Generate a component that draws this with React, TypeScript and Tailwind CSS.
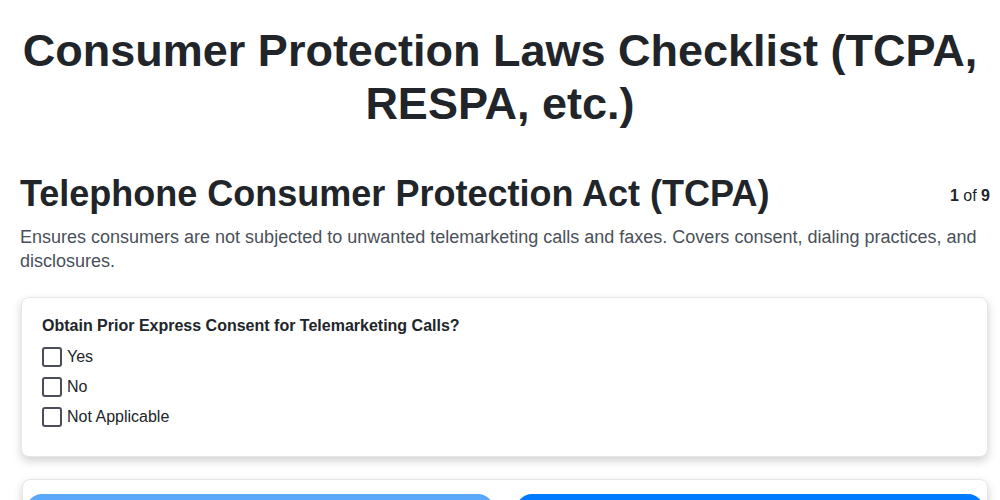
import { useState } from 'react';

const options = ['Yes', 'No', 'Not Applicable'];

export default function App() {
  const [checked, setChecked] = useState<Record<string, boolean>>({});

  return (
    <div className="min-h-screen bg-white text-[#212529]" style={{ fontFamily: '"Liberation Sans", Arial, sans-serif' }}>
      <h1 className="pt-[24px] text-center text-[45px] leading-[53px] font-bold">
        Consumer Protection Laws Checklist (TCPA, RESPA, etc.)
      </h1>

      <div className="pl-5 pr-[10px]">
        <div className="mt-[42px] flex items-start justify-between">
          <h2 className="text-[36px] leading-[43px] font-bold">Telephone Consumer Protection Act (TCPA)</h2>
          <div className="pt-[12px] text-base">
            <span className="font-bold">1</span> of <span className="font-bold">9</span>
          </div>
        </div>

        <p className="mt-[10px] text-[18px] leading-[24px] text-[#4a5059]">
          Ensures consumers are not subjected to unwanted telemarketing calls and faxes. Covers consent, dialing practices, and disclosures.
        </p>

        <div className="mt-[24px] ml-px mr-[2px] rounded-lg border border-[#e5e7eb] bg-white pt-4 px-5 pb-6 shadow-[0_4px_10px_rgba(0,0,0,0.18)]">
          <div className="text-base leading-6 font-bold">Obtain Prior Express Consent for Telemarketing Calls?</div>
          <div className="mt-1 flex flex-col">
            {options.map((opt) => (
              <label key={opt} className="flex h-[30px] items-center gap-[5px] text-base cursor-pointer">
                <input
                  type="checkbox"
                  checked={!!checked[opt]}
                  onChange={() => setChecked({ ...checked, [opt]: !checked[opt] })}
                  className="h-5 w-5 appearance-none rounded-[3px] border-2 border-[#4b4d5c] bg-white checked:bg-[#007bff]"
                />
                <span>{opt}</span>
              </label>
            ))}
          </div>
        </div>

        <div className="mt-[22px] ml-[2px] mr-[2px] rounded-lg border border-[#e5e7eb] bg-white pt-[14px] px-[3px] pb-4 shadow-[0_4px_10px_rgba(0,0,0,0.18)]">
          <div className="grid grid-cols-2 gap-[22px]">
            <button className="h-12 rounded-2xl bg-[#59a8fb] text-white font-bold">Previous</button>
            <button className="h-12 rounded-2xl bg-[#007bff] text-white font-bold">Next</button>
          </div>
        </div>
      </div>
    </div>
  );
}
